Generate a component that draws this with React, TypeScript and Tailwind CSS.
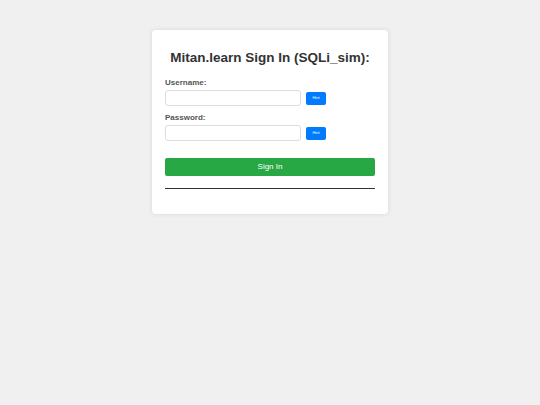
export default function App() {
  return (
    <div className="w-[540px] h-[405px] bg-[#f0f0f0] flex justify-center" style={{ fontFamily: '"Liberation Sans", Arial, sans-serif' }}>
      <div className="mt-[30px] w-[236px] h-[184px] bg-white rounded-[4px] shadow-[0_0_5px_rgba(0,0,0,0.1)] px-[13px] flex flex-col">
        <h1 className="mt-[18px] -mx-[13px] whitespace-nowrap text-center text-[13.5px] leading-[20px] font-bold text-[#333]">Mitan.learn Sign In (SQLi_sim):</h1>
        <label className="mt-[10px] text-[8px] leading-[10px] font-bold text-[#555]">Username:</label>
        <div className="mt-[2px] flex items-center">
          <div className="w-[136px] h-[16px] border border-[#ddd] rounded-[3px] bg-white"></div>
          <div className="ml-[5px] w-[20px] h-[13px] bg-[#007bff] rounded-[2px] flex items-center justify-center text-white text-[4px] leading-none">Hint</div>
        </div>
        <label className="mt-[7px] text-[8px] leading-[10px] font-bold text-[#555]">Password:</label>
        <div className="mt-[2px] flex items-center">
          <div className="w-[136px] h-[16px] border border-[#ddd] rounded-[3px] bg-white"></div>
          <div className="ml-[5px] w-[20px] h-[13px] bg-[#007bff] rounded-[2px] flex items-center justify-center text-white text-[4px] leading-none">Hint</div>
        </div>
        <div className="mt-[17px] h-[18px] bg-[#28a745] rounded-[2px] flex items-center justify-center text-white text-[8px]">Sign In</div>
        <div className="mt-[12px] h-px bg-[#333]"></div>
      </div>
    </div>
  );
}
